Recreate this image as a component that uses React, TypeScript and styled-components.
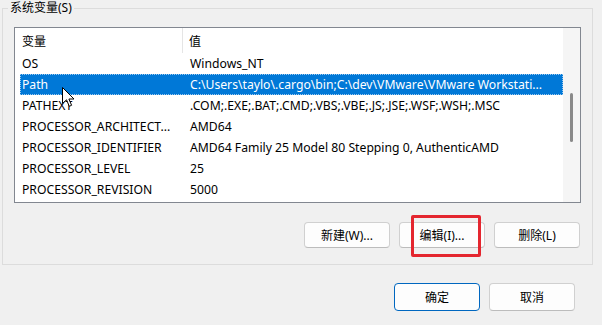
import styled, { createGlobalStyle } from 'styled-components';

const GlobalStyle = createGlobalStyle`
	html, body {
		margin: 0;
		padding: 0;
		background: #f0f0f0;
	}
	body {
		font-family: 'Noto Sans', 'Noto Sans CJK SC', sans-serif;
		font-size: 12px;
		color: #000000;
	}
`;

interface EnvVar {
	name: string;
	value: string;
}

const vars: EnvVar[] = [
	{ name: 'OS', value: 'Windows_NT' },
	{
		name: 'Path',
		value: 'C:\\Users\\taylo\\.cargo\\bin;C:\\dev\\VMware\\VMware Workstati...',
	},
	{ name: 'PATHEXT', value: '.COM;.EXE;.BAT;.CMD;.VBS;.VBE;.JS;.JSE;.WSF;.WSH;.MSC' },
	{ name: 'PROCESSOR_ARCHITECT...', value: 'AMD64' },
	{
		name: 'PROCESSOR_IDENTIFIER',
		value: 'AMD64 Family 25 Model 80 Stepping 0, AuthenticAMD',
	},
	{ name: 'PROCESSOR_LEVEL', value: '25' },
	{ name: 'PROCESSOR_REVISION', value: '5000' },
];

const Cursor = () => (
	<StyledCursor width='13' height='21' viewBox='0 0 13 21'>
		<path
			d='M0.5 0.5 L0.5 16.5 L4.5 12.8 L7.3 19.3 L9.6 18.3 L6.9 12 L12 12 Z'
			fill='#ffffff'
			stroke='#000000'
			strokeWidth='1'
			strokeLinejoin='round'
		/>
	</StyledCursor>
);

export default function App() {
	const selected = 'Path';

	return (
		<>
			<GlobalStyle />
			<StyledPage>
				<StyledGroup>
					<legend>系统变量(S)</legend>
					<StyledList>
						<StyledListBody>
							<StyledHeader>
								<span className='name'>变量</span>
								<span className='value'>值</span>
							</StyledHeader>
							{vars.map(v => (
								<StyledRow key={v.name} $selected={v.name === selected}>
									<span>{v.name}</span>
									<span>{v.value}</span>
								</StyledRow>
							))}
						</StyledListBody>
						<StyledScrollbar>
							<div className='thumb' />
						</StyledScrollbar>
					</StyledList>
					<StyledButtonRow>
						<StyledButton>新建(W)...</StyledButton>
						<StyledButton>编辑(I)...</StyledButton>
						<StyledButton>删除(L)</StyledButton>
						<StyledHighlight />
					</StyledButtonRow>
				</StyledGroup>
				<StyledFooter>
					<StyledButton $primary>确定</StyledButton>
					<StyledButton>取消</StyledButton>
				</StyledFooter>
				<Cursor />
			</StyledPage>
		</>
	);
}

const StyledPage = styled.div`
	position: relative;
	width: 602px;
	height: 325px;
	overflow: hidden;
	padding-left: 2px;
	box-sizing: border-box;
`;

const StyledGroup = styled.fieldset`
	margin: 0;
	width: 591px;
	box-sizing: border-box;
	padding: 11px 11px 16px 11px;
	border: 1px solid #dcdcdc;
	legend {
		margin-left: -6px;
		padding: 0 2px;
		line-height: 16px;
		font-size: 12px;
	}
`;

const StyledList = styled.div`
	display: flex;
	height: 176px;
	box-sizing: border-box;
	border: 1px solid #828790;
	background: #ffffff;
`;

const StyledListBody = styled.div`
	flex: 1;
	overflow: hidden;
`;

const StyledHeader = styled.div`
	display: grid;
	grid-template-columns: 168px 1fr;
	height: 25px;
	align-items: center;
	span {
		display: flex;
		align-items: center;
		height: 25px;
	}
	.name {
		padding-left: 7px;
		border-right: 1px solid #e5e5e5;
	}
	.value {
		padding-left: 6px;
	}
`;

const StyledRow = styled.div<{ $selected?: boolean }>`
	display: grid;
	grid-template-columns: 168px 1fr;
	margin-left: 5px;
	height: 21px;
	align-items: center;
	box-sizing: border-box;
	white-space: nowrap;
	font-size: 12.2px;
	color: ${p => (p.$selected ? '#ffffff' : '#000000')};
	background: ${p => (p.$selected ? '#0078d7' : 'transparent')};
	border: 1px dotted ${p => (p.$selected ? '#9cc8ee' : 'transparent')};
	span {
		padding-left: 1px;
		overflow: hidden;
	}
`;

const StyledScrollbar = styled.div`
	width: 17px;
	background: #f5f5f5;
	display: flex;
	justify-content: center;
	.thumb {
		margin-top: 65px;
		width: 3px;
		height: 49px;
		border-radius: 2px;
		background: #8a8a8a;
	}
`;

const StyledButtonRow = styled.div`
	position: relative;
	display: flex;
	justify-content: flex-end;
	gap: 9px;
	margin-top: 19px;
	padding-right: 1px;
`;

const StyledButton = styled.button<{ $primary?: boolean }>`
	width: 86px;
	height: 26px;
	box-sizing: border-box;
	font-family: inherit;
	font-size: 12px;
	color: #000000;
	background: #fdfdfd;
	border: 1px solid ${p => (p.$primary ? '#0067c0' : '#d0d0d0')};
	border-bottom-color: ${p => (p.$primary ? '#0067c0' : '#bcbcbc')};
	border-radius: 4px;
	padding: 0;
`;

const StyledHighlight = styled.div`
	position: absolute;
	left: 397px;
	top: -7px;
	width: 70px;
	height: 42px;
	box-sizing: border-box;
	border: 3px solid #e4262f;
	border-radius: 2px;
`;

const StyledFooter = styled.div`
	display: flex;
	justify-content: flex-end;
	gap: 9px;
	margin-top: 18px;
	padding-right: 27px;
	button {
		height: 28px;
	}
`;

const StyledCursor = styled.svg`
	position: absolute;
	left: 62px;
	top: 87px;
`;
